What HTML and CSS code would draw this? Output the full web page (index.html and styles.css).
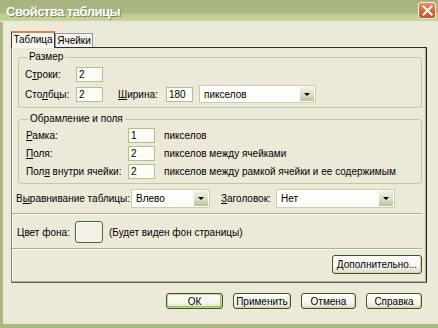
FILE: index.html
```html
<!DOCTYPE html>
<html lang="ru">
<head>
    <meta charset="UTF-8">
    <title>Свойства таблицы</title>
    <link rel="stylesheet" href="styles.css">
</head>
<body>
<div class="window">
    <div class="titlebar">
        <span class="title">Свойства таблицы</span>
        <span class="close">
            <svg width="11" height="11" viewBox="0 0 11 11"><path d="M1.5 1.5 L9.5 9.5 M9.5 1.5 L1.5 9.5" stroke="#fff" stroke-width="2" stroke-linecap="square"/></svg>
        </span>
    </div>
    <div class="frame">
        <div class="tabs">
            <span class="tab active">Таблица</span>
            <span class="tab">Ячейки</span>
        </div>
        <div class="panel">
            <fieldset class="group size">
                <legend>Размер</legend>
                <div class="row r1">
                    <label class="lbl w51">С<u>т</u>роки:</label>
                    <span class="field">2</span>
                </div>
                <div class="row r2">
                    <label class="lbl w51">Сто<u>л</u>бцы:</label>
                    <span class="field">2</span>
                    <label class="lbl width-lbl"><u>Ш</u>ирина:</label>
                    <span class="field">180</span>
                    <span class="combo units">пикселов<span class="drop"></span></span>
                </div>
            </fieldset>

            <fieldset class="group borders">
                <legend>Обрамление и поля</legend>
                <div class="row line">
                    <label class="lbl w102"><u>Р</u>амка:</label>
                    <span class="field">1</span>
                    <span class="hint">пикселов</span>
                </div>
                <div class="row line">
                    <label class="lbl w102"><u>П</u>оля:</label>
                    <span class="field">2</span>
                    <span class="hint">пикселов между ячейками</span>
                </div>
                <div class="row line">
                    <label class="lbl w102">Пол<u>я</u> внутри ячейки:</label>
                    <span class="field">2</span>
                    <span class="hint">пикселов между рамкой ячейки и ее содержимым</span>
                </div>
            </fieldset>

            <div class="row align-row">
                <label class="lbl w115">В<u>ы</u>равнивание таблицы:</label>
                <span class="combo align">Влево<span class="drop"></span></span>
                <label class="lbl head-lbl"><u>З</u>аголовок:</label>
                <span class="combo header">Нет<span class="drop"></span></span>
            </div>

            <hr class="sep">

            <div class="row color-row">
                <label class="lbl w58">Цвет фона:</label>
                <span class="swatch"></span>
                <span class="note">(Будет виден фон страницы)</span>
            </div>

            <hr class="sep">

            <div class="more-row">
                <button class="btn more">Дополнительно...</button>
            </div>
        </div>

        <div class="actions">
            <button class="btn default ok">ОК</button>
            <button class="btn apply">Применить</button>
            <button class="btn cancel">Отмена</button>
            <button class="btn help">Справка</button>
        </div>
    </div>
</div>
</body>
</html>
```

FILE: styles.css
```css
*{
    box-sizing: border-box;
}
body{
    margin: 0;
    width: 438px;
    height: 328px;
    overflow: hidden;
    background-color: #ece9d8;
    font-family: "Liberation Sans", Arial, sans-serif;
    font-size: 10px;
    color: #000;
}
u{
    text-decoration: underline;
}
.window{
    height: 328px;
    display: flex;
    flex-direction: column;
}
.titlebar{
    flex: none;
    height: 22px;
    display: flex;
    align-items: center;
    justify-content: space-between;
    padding: 0 2px 0 6px;
    background: linear-gradient(#a5b37e 0, #abb986 13px, #bfcb91 14px, #c4d096 20px, #dce1c0 21px, #ece9d8 22px);
}
.title{
    color: #fff;
    font-weight: bold;
    font-size: 13px;
    letter-spacing: -0.5px;
    text-shadow: 1px 1px 0 #7b8659;
    margin-top: 1px;
}
.close{
    width: 18px;
    height: 17px;
    margin-top: -1px;
    border: 1px solid #f4f1e4;
    border-radius: 3px;
    background: linear-gradient(#e4916a, #d4663d 55%, #c7562f);
    display: flex;
    align-items: center;
    justify-content: center;
}
.frame{
    flex: 1;
    display: flex;
    flex-direction: column;
    border-left: 3px solid #a9b782;
    border-bottom: 4px solid #a9b782;
    padding: 9px 0 0 8px;
}

/* tabs */
.tabs{
    display: flex;
    align-items: flex-end;
    height: 16px;
    position: relative;
    z-index: 1;
}
.tab{
    height: 14px;
    width: 38px;
    text-align: center;
    line-height: 13px;
    border: 1px solid #9a9a8a;
    border-bottom: none;
    background-color: #f4f3ee;
}
.tab.active{
    width: 44px;
    height: 17px;
    margin-bottom: -1px;
    line-height: 14px;
    border-color: #3a3a32;
    border-top: 2px solid #dc8450;
    background-color: #f9f8f3;
}

/* panel */
.panel{
    width: 416px;
    height: 236px;
    display: flex;
    flex-direction: column;
    padding: 3px 4px 0 4px;
    border: 1px solid #2c2c28;
    border-left-color: #85847a;
    border-bottom-color: #5e5d54;
    box-shadow: inset -1px -1px 0 #aeac9f, inset 1px 0 0 #fbfaf4;
}
.group{
    margin: 0 0 0 2px;
    padding: 0 6px 4px 6px;
    border: 1px solid #c6c3b3;
    border-radius: 3px;
}
.group legend{
    padding: 0 2px;
    margin-left: 2px;
    line-height: 12px;
}
.borders{
    margin-top: 5px;
    padding-left: 7px;
}
.row{
    display: flex;
    align-items: center;
}
.r1{
    height: 15px;
    margin-top: 4px;
}
.r2{
    height: 18px;
    margin-top: 3px;
}
.line{
    height: 15px;
    margin-top: 3px;
}
.lbl{
    flex: none;
    white-space: nowrap;
}
.w51{ width: 51px; }
.w58{ width: 58px; }
.w102{ width: 102px; }
.w115{ width: 115px; }
.width-lbl{
    width: 48px;
    margin-left: 15px;
}
.head-lbl{
    width: 55px;
    margin-left: 11px;
}
.field{
    flex: none;
    width: 27px;
    height: 15px;
    line-height: 13px;
    padding-left: 2px;
    border: 1px solid #b3bf8b;
    background-color: #fcfcf7;
}
.hint{
    margin-left: 9px;
    white-space: nowrap;
}
.combo{
    flex: none;
    display: flex;
    align-items: center;
    justify-content: space-between;
    padding-left: 4px;
    border: 1px solid #c9ceb0;
    background-color: #fdfdf9;
}
.units{
    width: 117px;
    height: 18px;
    margin-left: 6px;
}
.align{
    width: 79px;
    height: 19px;
}
.header{
    width: 119px;
    height: 19px;
}
.drop{
    align-self: stretch;
    width: 14px;
    margin: 1px;
    display: flex;
    align-items: center;
    justify-content: center;
    background: linear-gradient(#f1efe4, #dcd9c4 60%, #b9c28f);
}
.drop::after{
    content: '';
    border-left: 3px solid transparent;
    border-right: 3px solid transparent;
    border-top: 3px solid #000;
}
.align-row{
    height: 19px;
    margin-top: 5px;
}
.sep{
    margin: 5px 0 0 -4px;
    height: 2px;
    border: none;
    border-top: 1px solid #aeab9c;
    border-bottom: 1px solid #fbfaf5;
}
.color-row{
    height: 22px;
    margin-top: 6px;
    padding-left: 1px;
}
.swatch{
    flex: none;
    width: 28px;
    height: 22px;
    border: 1px solid #556330;
    border-radius: 3px;
    background-color: #f3f1e5;
    box-shadow: inset 1px 1px 0 #fff;
}
.note{
    margin-left: 6px;
}
.more-row{
    display: flex;
    justify-content: flex-end;
    margin-top: 5px;
}

/* buttons */
.btn{
    font: inherit;
    color: #000;
    height: 16px;
    padding: 0;
    border: 1px solid #3b5b17;
    border-radius: 3px;
    background: linear-gradient(#fffffb, #f5f4ed 65%, #dedac8);
    box-shadow: inset -1px -1px 0 #d4cfb8;
}
.btn.default{
    box-shadow: inset 0 0 0 1px #bcd792, inset -1px -1px 0 1px #9cc066;
}
.more{
    width: 90px;
    height: 19px;
}
.actions{
    display: flex;
    justify-content: flex-end;
    gap: 10px;
    padding: 10px 16px 0 0;
}
.ok{ width: 57px; }
.apply{ width: 58px; }
.cancel{ width: 55px; }
.help{ width: 56px; }
```
